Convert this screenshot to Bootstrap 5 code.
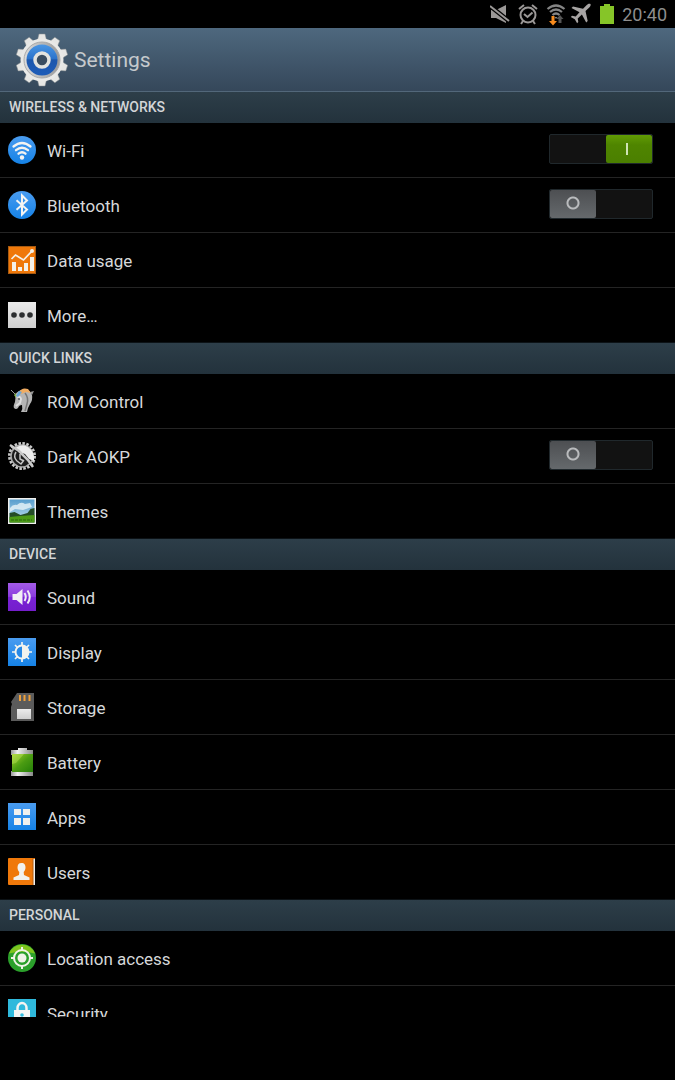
<!DOCTYPE html>
<html lang="en">
<head>
<meta charset="utf-8">
<meta name="viewport" content="width=device-width, initial-scale=1">
<title>Settings</title>
<link href="https://cdn.jsdelivr.net/npm/bootstrap@5.3.0/dist/css/bootstrap.min.css" rel="stylesheet">
<style>
body{background:#000;color:#d6d8da;font-family:Roboto,"Noto Sans",sans-serif;font-size:17px;line-height:24px}
.statusbar{height:28px;color:#8e8e8e;font-size:18px;line-height:28px}
.statusbar time{padding-top:2px}
.titlebar{height:64px;background:linear-gradient(#4e687e,#35475a);border-bottom:1px solid #52677a;padding-left:14px}
.titlebar h1{font-size:21px;line-height:28px;font-weight:400;color:#c5c9cc}
.settings-scroll{overflow-y:auto;scrollbar-width:none;min-height:0}
.settings-scroll::-webkit-scrollbar{display:none}
.section-title{height:31px;line-height:31px;font-size:14px;font-weight:500;padding-left:9px;color:#d3d5d7;background:linear-gradient(#2d3e49,#23323c)}
.setting{height:55px;border-bottom:1px solid #242424;padding:0 22px 0 8px;gap:11px}
.setting:last-child{border-bottom-color:#0c1216}
.setting a,.setting label{color:inherit;text-decoration:none;padding-top:1px}
.glyph{width:28px;height:28px;flex:none}
.toggle{appearance:none;-webkit-appearance:none;width:104px;height:30px;margin:0 0 2px auto;background:#121212;border:1px solid #20282c;border-radius:2px;display:flex;cursor:pointer}
.toggle::before{content:"";width:46px;background:radial-gradient(circle at 23px 13px,transparent 4px,#b9bbbd 5px,#b9bbbd 6px,transparent 7px),linear-gradient(#4d4f52,#65696c);border-radius:2px}
.toggle:checked::before{margin-left:auto;background:linear-gradient(#cfe3b4,#cfe3b4) 20px 8px/2px 12px no-repeat,linear-gradient(#619c04,#4f8500 35%,#4b7f00)}
.navspace{height:63px;flex:none}
</style>
</head>
<body>
<svg class="position-absolute" width="0" height="0" aria-hidden="true">
  <defs>
    <linearGradient id="blue" x2="0" y2="1"><stop stop-color="#4a9cf0"/><stop offset="1" stop-color="#1582e6"/></linearGradient>
    <linearGradient id="purple" x2="0" y2="1"><stop stop-color="#a45be8"/><stop offset=".48" stop-color="#8b3cdd"/><stop offset=".5" stop-color="#7a22d6"/><stop offset="1" stop-color="#741ecb"/></linearGradient>
    <linearGradient id="silver" x2="0" y2="1"><stop stop-color="#ececec"/><stop offset="1" stop-color="#cfcfcf"/></linearGradient>
    <linearGradient id="metal"><stop stop-color="#999"/><stop offset=".3" stop-color="#f0f0f0"/><stop offset="1" stop-color="#888"/></linearGradient>
    <linearGradient id="cell" x2="1" y2="1"><stop stop-color="#a5d42c"/><stop offset=".5" stop-color="#4b9c12"/><stop offset="1" stop-color="#247f08"/></linearGradient>
    <linearGradient id="sky" x2="0" y2="1"><stop stop-color="#579dcd"/><stop offset="1" stop-color="#c5e4f1"/></linearGradient>
    <linearGradient id="ring"><stop stop-color="#ddd"/><stop offset=".5" stop-color="#b8b8b8"/><stop offset="1" stop-color="#999"/></linearGradient>
    <linearGradient id="core" x2="0" y2="1"><stop stop-color="#4a96e4"/><stop offset=".45" stop-color="#2c74cc"/><stop offset=".5" stop-color="#1c57ad"/><stop offset="1" stop-color="#1e5cb8"/></linearGradient>
  </defs>
</svg>
<div class="vh-100 d-flex flex-column">
  <div class="statusbar d-flex align-items-center justify-content-end flex-shrink-0 pe-2">
    <svg width="20" height="22" viewBox="0 0 20 22" class="me-2" role="img" aria-label="Muted"><path d="M1 7h5l10-5v18l-10-5H1z" fill="#9b9897"/><path d="M0 3l19 15" stroke="#000" stroke-width="4.500"/><path d="M0 3l19 15" stroke="#9b9897" stroke-width="2"/></svg>
    <svg width="20" height="22" viewBox="0 0 20 22" class="me-2" role="img" aria-label="Alarm" fill="none" stroke="#9b9897" stroke-width="2"><circle cx="10" cy="12" r="7.500"/><path d="M6 11l3.500 3 5-4.500M1 6l5-4M19 6l-5-4M5 18l-2 3M15 18l2 3"/></svg>
    <svg width="20" height="24" viewBox="0 0 20 24" class="me-1" role="img" aria-label="Wi-Fi connected" fill="none"><path d="M1.500 7q8.500-7 17 0M4 10q6-5 12 0M6.500 13q3.500-3 7 0" stroke="#858585" stroke-width="2.200"/><path d="M8.500 15h3l-1.500 2z" fill="#858585"/><path d="M5.500 14h3v5h2.500l-4 4.500-4-4.500h2.500z" fill="#f68b1e"/><path d="M12.500 21v-4h-2l3.500-4 3.500 4h-2v4z" fill="#555"/></svg>
    <svg width="22" height="22" viewBox="0 0 22 22" role="img" aria-label="Airplane mode"><path d="M20.500 1c-1.500-.7-3 .2-4 1.200l-3.500 3.500L3 3.500 1.500 5l8 4.200-3.800 4.300-3.700-.7-1.200 1.200 4 2.300 2.300 4 1.200-1.200-.6-3.700 4.200-3.900 4.300 8 1.500-1.600L15.500 8 19 4.800c1-1 2.200-2.600 1.500-3.800z" fill="#a7a4a3"/></svg>
    <svg width="14" height="22" viewBox="0 0 14 22" class="mx-2" role="img" aria-label="Battery full"><path d="M4 1h6v2h4v18H0V3h4z" fill="#86c528"/></svg>
    <time>20:40</time>
  </div>
  <header class="titlebar d-flex align-items-center flex-shrink-0">
    <svg width="56" height="56" viewBox="0 0 56 56" class="me-1" aria-hidden="true">
      <g fill="#e6e6e4" stroke="#8b8f92" stroke-width=".5">
        <path id="tooth" d="M23.500 8l1.500-6h6l1.500 6v40l-1.500 6h-6l-1.500-6z"/><use href="#tooth" transform="rotate(36 28 28)"/><use href="#tooth" transform="rotate(72 28 28)"/><use href="#tooth" transform="rotate(108 28 28)"/><use href="#tooth" transform="rotate(144 28 28)"/>
      </g>
      <circle cx="28" cy="28" r="21.500" fill="#e9e9e7"/>
      <circle cx="28" cy="28" r="18" fill="url(#ring)" stroke="#aaa"/>
      <circle cx="28" cy="28" r="15.500" fill="url(#core)"/>
      <circle cx="28" cy="28" r="7" fill="#3a4d60" stroke="#e3e3df" stroke-width="3.500"/>
    </svg>
    <h1 class="m-0">Settings</h1>
  </header>
  <main class="settings-scroll flex-grow-1">
    <section>
      <h2 class="section-title m-0">WIRELESS &amp; NETWORKS</h2>
      <ul class="list-unstyled m-0">
        <li class="setting d-flex align-items-center">
          <svg class="glyph" viewBox="0 0 28 28" aria-hidden="true"><circle cx="14" cy="14" r="14" fill="url(#blue)"/><g fill="none" stroke="#f4f4f2" stroke-width="2.300" stroke-linecap="round"><path d="M5.500 10.500q8.500-7 17 0M8 14.200q6-5 12 0M10.500 17.700q3.500-3 7 0"/></g><circle cx="14" cy="21.500" r="2.200" fill="#f4f4f2"/></svg>
          <label for="wifi">Wi-Fi</label>
          <input class="toggle" type="checkbox" role="switch" id="wifi" checked>
        </li>
        <li class="setting d-flex align-items-center">
          <svg class="glyph" viewBox="0 0 28 28" aria-hidden="true"><circle cx="14" cy="14" r="14" fill="url(#blue)"/><path d="M8.500 9.200l10.500 9.300-5 5V4.500l5 5-10.500 9.300" fill="none" stroke="#f4f4f2" stroke-width="2"/></svg>
          <label for="bt">Bluetooth</label>
          <input class="toggle" type="checkbox" role="switch" id="bt">
        </li>
        <li class="setting d-flex align-items-center">
          <svg class="glyph" viewBox="0 0 28 28" aria-hidden="true"><path d="M0 0h28v28H0z" fill="#a85a10"/><path d="M1 1h26v26H1z" fill="#ef780a"/><path d="M4 16h4v9H4zm6 5h4v4h-4zm6-4h4v8h-4zm6-6h4v14h-4z" fill="#f4f1e8"/><path d="M3.500 13l4-4 8 5L24 5" fill="none" stroke="#f4f1e8" stroke-width="1.700"/><circle cx="24" cy="5" r="2" fill="#f4f1e8"/></svg>
          <a href="#data">Data usage</a>
        </li>
        <li class="setting d-flex align-items-center">
          <svg class="glyph" viewBox="0 0 28 28" aria-hidden="true"><path d="M0 1h28v26H0z" fill="url(#silver)"/><g fill="#2c2e30"><circle cx="6" cy="14" r="2.800"/><circle cx="14" cy="14" r="2.800"/><circle cx="22" cy="14" r="2.800"/></g></svg>
          <a href="#more">More…</a>
        </li>
      </ul>
    </section>
    <section>
      <h2 class="section-title m-0">QUICK LINKS</h2>
      <ul class="list-unstyled m-0">
        <li class="setting d-flex align-items-center">
          <svg class="glyph" viewBox="0 0 28 28" aria-hidden="true"><path d="M7 8q3-5 8-5 7-1 9 5 1 5-2 9-2 3-3 8l-6 0q2-3 1-7-3 0-4 3-2 2-4 0-1-2 1-6 1-4 0-7z" fill="#b5b5b5"/><path d="M17 6q4 5 2 11l-2 7" stroke="#777" fill="none" stroke-width="1.500"/><path d="M9 10q3-1 4 2l-1 4-4 3" fill="none" stroke="#dedede" stroke-width="2"/><path d="M3 3l6 6" stroke="#999"/><path d="M11 5q3-5 9-3l3 4-5-1-5 2z" fill="#f0ac62"/><path d="M8 9l3-5 3 1-4 5z" fill="#68a6d8"/><path d="M6 8l2-2v5z" fill="#8dbb53"/><path d="M22 5l4-1-2 4z" fill="#999"/><path d="M10 12h2" stroke="#333"/></svg>
          <a href="#rom">ROM Control</a>
        </li>
        <li class="setting d-flex align-items-center">
          <svg class="glyph" viewBox="0 0 28 28" aria-hidden="true"><circle cx="14" cy="14" r="12.500" fill="none" stroke="#c9c9c9" stroke-width="3" stroke-dasharray="2.500 1.427"/><circle cx="14" cy="14" r="11" fill="#1c1c1c" stroke="#aaa" stroke-width="1.500"/><path d="M7 6q7-5 13-1 7 5 6 14l-5-2-4-5-6-2z" fill="#ececec"/><path d="M2 3l9 6 9 9 5 7" stroke="#c9c9c9" stroke-width="2.500" fill="none"/><path d="M8 10q-3 5 1 9l4 3 3-4M12 12v5l4 2" fill="none" stroke="#c5c5c5" stroke-width="1.500"/></svg>
          <label for="dark">Dark AOKP</label>
          <input class="toggle" type="checkbox" role="switch" id="dark">
        </li>
        <li class="setting d-flex align-items-center">
          <svg class="glyph" viewBox="0 0 28 28" aria-hidden="true"><path d="M0 1h28v26H0z" fill="#f0f0ee"/><path d="M1.500 2.500h25v23h-25z" fill="url(#sky)"/><path d="M2 11q3-4 7-3 4-4 8-1l5-1 2 4-9 3-8-1-5 3z" fill="#e9f4f8" opacity=".8"/><path d="M1.500 16l5-1 6 3 7-2 3-4 4-1v14.500h-25z" fill="#244c27"/><path d="M1.500 20l10-1 15-1v7.500h-25z" fill="#4c9a17"/><path d="M3 23h21" stroke="#27690d" stroke-dasharray="3 1"/></svg>
          <a href="#themes">Themes</a>
        </li>
      </ul>
    </section>
    <section>
      <h2 class="section-title m-0">DEVICE</h2>
      <ul class="list-unstyled m-0">
        <li class="setting d-flex align-items-center">
          <svg class="glyph" viewBox="0 0 28 28" aria-hidden="true"><path d="M0 0h28v28H0z" fill="url(#purple)"/><path d="M4.500 11h4l6-5v16l-6-5h-4z" fill="#f1eef4"/><path d="M16.500 10q2.500 4 0 8M19.500 7.500q4.500 6.500 0 13" fill="none" stroke="#f1eef4" stroke-width="2"/></svg>
          <a href="#sound">Sound</a>
        </li>
        <li class="setting d-flex align-items-center">
          <svg class="glyph" viewBox="0 0 28 28" aria-hidden="true"><path d="M0 0h28v28H0z" fill="url(#blue)"/><path d="M14 4v20M4 14h20M7 7l14 14M21 7L7 21" stroke="#f3f3ee" stroke-width="1.700"/><circle cx="14" cy="14" r="7.500" fill="#f3f3ee"/><path d="M14 8.500a5.500 5.500 0 0 0 0 11z" fill="#2889e6"/></svg>
          <a href="#display">Display</a>
        </li>
        <li class="setting d-flex align-items-center">
          <svg class="glyph" viewBox="0 0 28 28" aria-hidden="true"><path d="M9 0h17v28H3V14l1-3-1-2z" fill="#5b5b5b"/><path d="M11 2h2v6h-2zm4.500 0h2v6h-2zm5 0h2v6h-2z" fill="#f0a03a"/><path d="M9 16h14v10H9z" fill="url(#silver)"/></svg>
          <a href="#storage">Storage</a>
        </li>
        <li class="setting d-flex align-items-center">
          <svg class="glyph" viewBox="0 0 28 28" aria-hidden="true"><path d="M10 0h9v3h-9zM3 2h22v5H3zm0 21h22v5H3z" fill="url(#metal)"/><path d="M4 6h21v18H4z" fill="url(#cell)"/><path d="M4 6h12l-8 9-4 1z" fill="#c5e863" opacity=".4"/></svg>
          <a href="#battery">Battery</a>
        </li>
        <li class="setting d-flex align-items-center">
          <svg class="glyph" viewBox="0 0 28 28" aria-hidden="true"><path d="M0 0h28v27H0z" fill="url(#blue)"/><path d="M6 6h7v6H6zm9 0h7v6h-7zM6 15h7v7H6zm9 0h7v7h-7z" fill="#f1f1ee"/></svg>
          <a href="#apps">Apps</a>
        </li>
        <li class="setting d-flex align-items-center">
          <svg class="glyph" viewBox="0 0 28 28" aria-hidden="true"><path d="M0 1q0-1 1-1h26v27H1q-1 0-1-1z" fill="#ef780a"/><path d="M25 1h2v26h-2z" fill="#eee"/><path d="M25 0v27" stroke="#b45c0c"/><path d="M13.500 5c3 0 4 2 4 4.500 0 2-1 3.500-1.800 4.500l.3 3 5.500 2.500V22h-16v-2.500l5.500-2.500.3-3c-.8-1-1.800-2.500-1.800-4.500 0-2.500 1-4.500 4-4.500z" fill="#f1f1ee"/></svg>
          <a href="#users">Users</a>
        </li>
      </ul>
    </section>
    <section>
      <h2 class="section-title m-0">PERSONAL</h2>
      <ul class="list-unstyled m-0">
        <li class="setting d-flex align-items-center">
          <svg class="glyph" viewBox="0 0 28 28" aria-hidden="true"><circle cx="14" cy="14" r="14" fill="#2ba02b"/><path d="M1 9.500a14 14 0 0 1 26 0Q14 6 1 9.500z" fill="#7fc41e"/><circle cx="14" cy="14" r="8" fill="none" stroke="#f1f3e8" stroke-width="2"/><circle cx="14" cy="14" r="4.500" fill="#f1f3e8"/><path d="M14 3v4M14 21v4M3 14h4M21 14h4" stroke="#f1f3e8" stroke-width="2"/></svg>
          <a href="#location">Location access</a>
        </li>
        <li class="setting d-flex align-items-center">
          <svg class="glyph" viewBox="0 0 28 28" aria-hidden="true"><path d="M0 0h28v28H0z" fill="#2fb9dc"/><path d="M9.500 12V9a4.500 5 0 0 1 9 0v3" fill="none" stroke="#f4f4f2" stroke-width="2.500"/><path d="M6 11h16v13H6z" fill="#f4f4f2"/><circle cx="14" cy="16" r="1.800" fill="#2fb9dc"/></svg>
          <a href="#security">Security</a>
        </li>
      </ul>
    </section>
  </main>
  <div class="navspace"></div>
</div>
<script src="https://cdn.jsdelivr.net/npm/bootstrap@5.3.0/dist/js/bootstrap.bundle.min.js"></script>
</body>
</html>
